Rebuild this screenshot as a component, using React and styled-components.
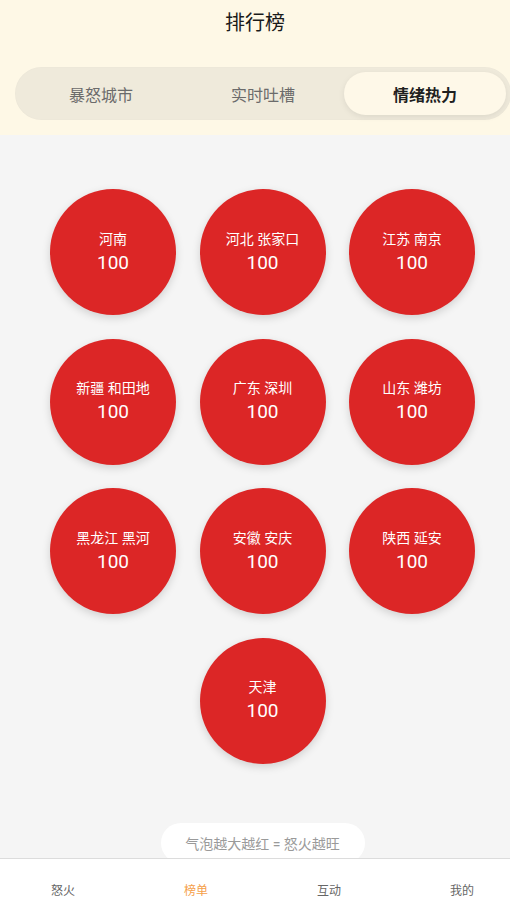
import React from 'react'
import styled, { createGlobalStyle } from 'styled-components'

const cities = [
  '河南', '河北 张家口', '江苏 南京',
  '新疆 和田地', '广东 深圳', '山东 潍坊',
  '黑龙江 黑河', '安徽 安庆', '陕西 延安',
  '天津',
]

const tabs = ['暴怒城市', '实时吐槽', '情绪热力']
const navItems = ['怒火', '榜单', '互动', '我的']

function App() {
  return (
    <>
      <GlobalStyle />
      <Page>
        <Header>
          <Title>排行榜</Title>
          <Segment>
            {tabs.map((t, i) => (
              <SegmentTab key={t} active={i === 2}>{t}</SegmentTab>
            ))}
          </Segment>
        </Header>
        <Content>
          <BubbleGrid>
            {cities.map(c => (
              <Bubble key={c}>
                <BubbleName>{c}</BubbleName>
                <BubbleValue>100</BubbleValue>
              </Bubble>
            ))}
          </BubbleGrid>
          <Legend>气泡越大越红 = 怒火越旺</Legend>
        </Content>
        <TabBar>
          {navItems.map((n, i) => (
            <TabItem key={n} active={i === 1}>{n}</TabItem>
          ))}
        </TabBar>
      </Page>
    </>
  )
}

const GlobalStyle = createGlobalStyle`
  html, body {
    margin: 0;
    padding: 0;
    overflow: hidden;
  }
  body {
    font-family: Roboto, "Noto Sans CJK SC", sans-serif;
    background: #f5f5f5;
  }
`
const Page = styled.div`
  width: 510px;
  height: 904px;
  display: flex;
  flex-direction: column;
  overflow: hidden;
`
const Header = styled.div`
  background: #fef8e6;
  height: 135px;
  flex-shrink: 0;
  display: flex;
  flex-direction: column;
`
const Title = styled.h1`
  margin: 0;
  height: 46px;
  line-height: 46px;
  text-align: center;
  font-size: 20px;
  font-weight: 400;
  color: #1a1a1a;
`
const Segment = styled.div`
  margin: 21px 0 0 15px;
  width: 496px;
  height: 53px;
  box-sizing: border-box;
  padding: 5px;
  border-radius: 27px;
  background: #efeadb;
  display: flex;
  box-shadow: inset 0 0 2px rgba(0, 0, 0, 0.03);
`
const SegmentTab = styled.div`
  width: 162px;
  height: 43px;
  border-radius: 22px;
  display: flex;
  align-items: center;
  justify-content: center;
  font-size: 16px;
  color: ${p => (p.active ? '#1f1f1f' : '#6b6b6b')};
  font-weight: ${p => (p.active ? 700 : 400)};
  background: ${p => (p.active ? '#fef8e8' : 'transparent')};
  box-shadow: ${p => (p.active ? '0 2px 6px rgba(0, 0, 0, 0.08)' : 'none')};
`
const Content = styled.div`
  flex: 1;
  overflow: hidden;
  background: #f5f5f5;
  display: flex;
  flex-direction: column;
  align-items: center;
`
const BubbleGrid = styled.div`
  width: 425px;
  margin: 54px 0 0 15px;
  display: flex;
  flex-wrap: wrap;
  justify-content: center;
  column-gap: 23.5px;
  row-gap: 23.5px;
`
const Bubble = styled.div`
  width: 126px;
  height: 126px;
  border-radius: 50%;
  background: #dc2626;
  color: #fff;
  display: flex;
  flex-direction: column;
  align-items: center;
  justify-content: center;
  box-shadow: 0 3px 8px rgba(0, 0, 0, 0.15);
`
const BubbleName = styled.div`
  font-size: 14px;
  line-height: 20px;
`
const BubbleValue = styled.div`
  font-size: 19px;
  line-height: 27px;
`
const Legend = styled.div`
  margin: 59px 0 0 15px;
  width: 204px;
  height: 40px;
  flex-shrink: 0;
  border-radius: 20px;
  background: #fff;
  color: #9a9a9a;
  font-size: 14px;
  display: flex;
  align-items: center;
  justify-content: center;
`
const TabBar = styled.div`
  height: 46px;
  flex-shrink: 0;
  box-sizing: border-box;
  border-top: 1px solid #dcdcdc;
  background: #fff;
  display: flex;
  justify-content: space-between;
  align-items: flex-start;
  padding: 24px 36px 0 51px;
`
const TabItem = styled.div`
  font-size: 12px;
  line-height: 17px;
  color: ${p => (p.active ? '#f5a04a' : '#666')};
`

export default App
